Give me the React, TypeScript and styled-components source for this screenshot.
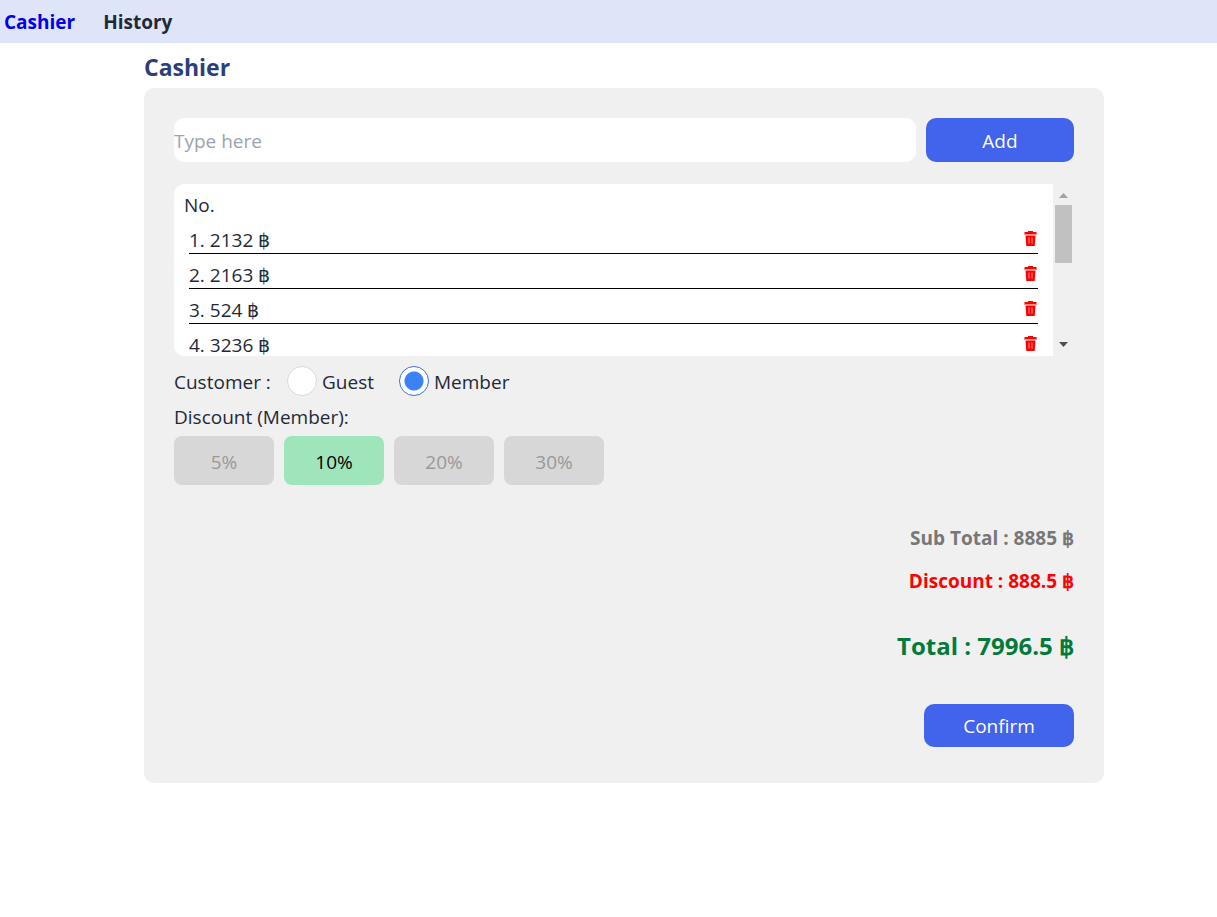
import React, { useState } from "react";
import styled, { createGlobalStyle } from "styled-components";

const GlobalStyle = createGlobalStyle`
  *, *::before, *::after { box-sizing: border-box; }
  body {
    margin: 0;
    background: #ffffff;
    color: #1f2937;
    font-family: "Segoe UI", "Open Sans", "Liberation Sans", sans-serif;
    font-size: 19px;
    font-weight: 400;
    line-height: 30px;
  }
  button, input { font: inherit; }
  h1, p, ol, fieldset { margin: 0; padding: 0; border: 0; min-width: 0; }
`;

const NavBar = styled.nav`
  display: flex;
  gap: 28px;
  padding: 7px 4px 6px;
  background: #dfe5f9;
`;

const NavLink = styled.a<{ $active?: boolean }>`
  color: ${(p) => (p.$active ? "#0000ee" : "#1f2937")};
  font-weight: 700;
  text-decoration: none;
`;

const Main = styled.main`
  display: flex;
  justify-content: center;
  padding: 9px 0 40px 31px;
`;

const Page = styled.div`
  width: 100%;
  max-width: 960px;
`;

const Title = styled.h1`
  color: #2d3f76;
  font-size: 23px;
  font-weight: 700;
  line-height: 30px;
  margin-bottom: 6px;
`;

const Panel = styled.section`
  padding: 30px 30px 36px;
  border-radius: 10px;
  background: #f0f0f0;
`;

const EntryForm = styled.form`
  display: flex;
  gap: 10px;
  margin-bottom: 22px;
`;

const AmountInput = styled.input`
  flex: 1;
  min-width: 0;
  height: 44px;
  padding: 2px 0 0;
  border: 0;
  border-radius: 10px;
  background: #ffffff;
  color: inherit;
  &::placeholder { color: #9ca3af; opacity: 1; }
`;

const PrimaryButton = styled.button<{ $width: number; $height: number }>`
  width: ${(p) => p.$width}px;
  height: ${(p) => p.$height}px;
  padding: 1px 0 0;
  border: 0;
  border-radius: 10px;
  background: #4263eb;
  color: #ffffff;
  cursor: pointer;
`;

const ListBox = styled.div`
  display: flex;
  height: 172px;
  border-radius: 10px;
  overflow: hidden;
`;

const ListScroll = styled.div`
  flex: 1;
  padding: 6px 15px 0;
  overflow-y: scroll;
  scrollbar-width: none;
  background: #ffffff;
`;

const ListHeading = styled.p`
  height: 29px;
  margin-left: -5px;
`;

const Items = styled.ol`
  list-style: none;
`;

const Item = styled.li`
  display: flex;
  align-items: center;
  justify-content: space-between;
  height: 35px;
  padding-top: 8px;
  border-bottom: 1px solid #000000;
`;

const DeleteButton = styled.button`
  display: flex;
  padding: 0 0 4px;
  border: 0;
  background: none;
  color: #ff0000;
  cursor: pointer;
`;

const ScrollTrack = styled.div`
  display: flex;
  flex-direction: column;
  align-items: center;
  width: 21px;
  padding: 9px 0;
`;

const ScrollThumb = styled.div`
  width: 17px;
  height: 58px;
  margin: 7px 0 auto;
  background: #c1c1c1;
`;

const CustomerRow = styled.fieldset`
  display: flex;
  align-items: center;
  margin-top: 10px;
`;

const CustomerLabel = styled.span`
  width: 113px;
  padding-top: 2px;
  line-height: 28px;
`;

const RadioLabel = styled.label`
  display: flex;
  align-items: center;
  gap: 5px;
  width: 112px;
`;

const RadioText = styled.span`
  padding-top: 2px;
  line-height: 28px;
`;

const Radio = styled.input`
  appearance: none;
  flex: none;
  width: 30px;
  height: 30px;
  margin: 0;
  border: 1px solid #d9d9d9;
  border-radius: 50%;
  background: #ffffff;
  &:checked {
    border-color: #3b74d9;
    background: radial-gradient(circle, #3b82f6 9px, #ffffff 10px);
  }
`;

const DiscountLabel = styled.p`
  margin: 6px 0 4px;
`;

const DiscountRow = styled.div`
  display: flex;
  gap: 10px;
`;

const DiscountButton = styled.button<{ $selected: boolean }>`
  width: 100px;
  height: 49px;
  padding: 2px 0 0;
  border: 0;
  border-radius: 8px;
  background: ${(p) => (p.$selected ? "#9fe5bc" : "#d7d7d7")};
  color: ${(p) => (p.$selected ? "#000000" : "#999999")};
  cursor: pointer;
`;

const Summary = styled.div`
  display: flex;
  flex-direction: column;
  align-items: flex-end;
  margin-top: 38px;
`;

const SummaryLine = styled.p<{ $color: string }>`
  margin-bottom: 13px;
  color: ${(p) => p.$color};
  font-weight: 700;
`;

const Total = styled.p`
  margin: 22px 0 43px;
  color: #047a3a;
  font-size: 24px;
  font-weight: 700;
`;

const TrashIcon = () => (
  <svg width="15" height="17" viewBox="0 0 15 17" aria-hidden="true">
    <path d="M5 1h5v1h3.500v3h-12V2H5z M2.500 5.500h10l-.8 10.500h-8.400z" fill="currentColor" />
    <path d="M1.500 4.500h12M6 7.500v6M9 7.500v6" stroke="#ff9090" strokeWidth="1" />
  </svg>
);

const Arrow = ({ down = false }: { down?: boolean }) => (
  <svg width="9" height="5" viewBox="0 0 9 5" aria-hidden="true">
    <path d={down ? "M0 0h9L4.500 5z" : "M0 5h9L4.500 0z"} fill={down ? "#505050" : "#a3a3a3"} />
  </svg>
);

const discounts = [5, 10, 20, 30];

export default function App() {
  const [items, setItems] = useState([2132, 2163, 524, 3236, 830]);
  const [draft, setDraft] = useState("");
  const [customer, setCustomer] = useState("Member");
  const [discount, setDiscount] = useState(10);

  const subTotal = items.reduce((sum, value) => sum + value, 0);
  const reduction = (subTotal * discount) / 100;

  const addItem = (event: React.FormEvent) => {
    event.preventDefault();
    const value = Number(draft);
    if (value > 0) setItems([...items, value]);
    setDraft("");
  };

  return (
    <>
      <GlobalStyle />
      <NavBar>
        <NavLink href="#cashier" $active>Cashier</NavLink>
        <NavLink href="#history">History</NavLink>
      </NavBar>
      <Main>
        <Page>
          <Title>Cashier</Title>
          <Panel>
            <EntryForm onSubmit={addItem}>
              <AmountInput
                aria-label="Amount"
                placeholder="Type here"
                value={draft}
                onChange={(e) => setDraft(e.target.value)}
              />
              <PrimaryButton type="submit" $width={148} $height={44}>Add</PrimaryButton>
            </EntryForm>
            <ListBox>
              <ListScroll>
                <ListHeading>No.</ListHeading>
                <Items>
                  {items.map((value, index) => (
                    <Item key={index}>
                      {`${index + 1}. ${value} ฿`}
                      <DeleteButton
                        type="button"
                        aria-label={`Delete item ${index + 1}`}
                        onClick={() => setItems(items.filter((_, i) => i !== index))}
                      >
                        <TrashIcon />
                      </DeleteButton>
                    </Item>
                  ))}
                </Items>
              </ListScroll>
              <ScrollTrack aria-hidden="true">
                <Arrow />
                <ScrollThumb />
                <Arrow down />
              </ScrollTrack>
            </ListBox>
            <CustomerRow>
              <CustomerLabel>Customer :</CustomerLabel>
              {["Guest", "Member"].map((kind) => (
                <RadioLabel key={kind}>
                  <Radio
                    type="radio"
                    name="customer"
                    checked={customer === kind}
                    onChange={() => setCustomer(kind)}
                  />
                  <RadioText>{kind}</RadioText>
                </RadioLabel>
              ))}
            </CustomerRow>
            <DiscountLabel>Discount ({customer}):</DiscountLabel>
            <DiscountRow>
              {discounts.map((rate) => (
                <DiscountButton
                  key={rate}
                  type="button"
                  $selected={rate === discount}
                  onClick={() => setDiscount(rate)}
                >
                  {rate}%
                </DiscountButton>
              ))}
            </DiscountRow>
            <Summary>
              <SummaryLine $color="#777777">Sub Total : {subTotal} ฿</SummaryLine>
              <SummaryLine $color="#ff0000">Discount : {reduction} ฿</SummaryLine>
              <Total>Total : {subTotal - reduction} ฿</Total>
              <PrimaryButton type="button" $width={150} $height={43}>Confirm</PrimaryButton>
            </Summary>
          </Panel>
        </Page>
      </Main>
    </>
  );
}
